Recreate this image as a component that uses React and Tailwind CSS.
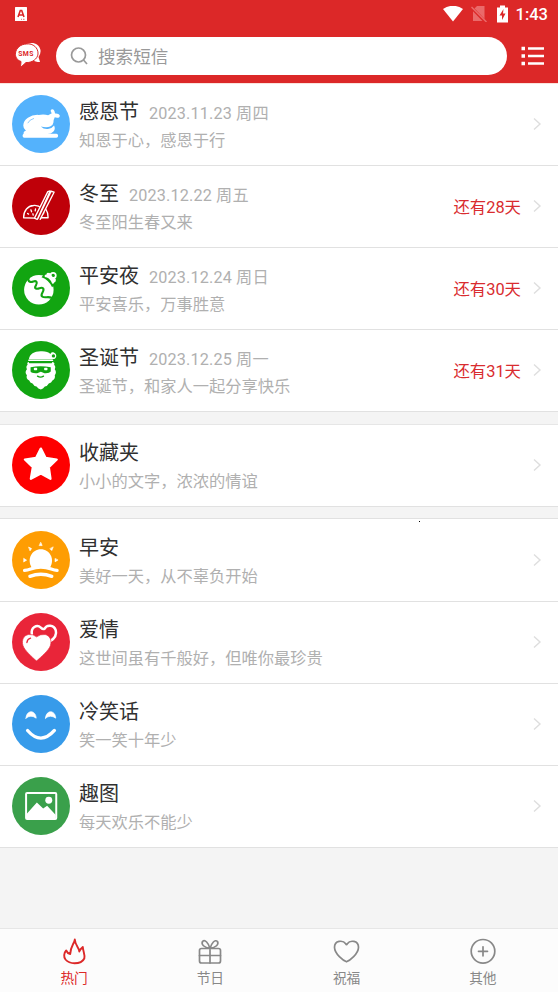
import React from "react";

const svgProps = {
  className: "mb-px h-[58px] w-[58px] shrink-0",
  fill: "none",
  strokeLinecap: "round",
  strokeLinejoin: "round",
};

function Turkey() {
  return (
    <svg {...svgProps} viewBox="35 34 175 175">
      <circle cx="122.500" cy="121.500" r="87.500" fill="#54b2fc" />
      <path fill="#fff" d="M70 152V148Q70 144 77 142Q69 136 69 126Q70 111 83 103Q97 93 115 94Q134 92 144 95L155 89Q149 81 154 78Q160 75 163 82L165 90Q176 89 179 95Q180 103 171 103L164 101Q160 108 160 117Q159 126 150 129Q140 133 122 129Q132 139 146 136Q156 134 162 126Q167 137 160 144Q153 152 142 152Z" />
      <path d="M83 118Q88 108 100 105" stroke="#54b2fc" strokeWidth="2" />
      <rect x="67" y="151" width="107" height="12" rx="5" fill="#fff" />
    </svg>
  );
}

function Dumpling() {
  return (
    <svg {...svgProps} viewBox="35 279 175 175">
      <circle cx="122.500" cy="366.500" r="87.500" fill="#bf0009" />
      <g stroke="#fff" strokeWidth="4">
        <path d="M70 402C70 380 83 366 100 365C110 364 119 368 124 373M137 376Q144 386 144 402L119 402M70 402L103 403" />
        <path d="M82 389l3 2M92 378l2 6M106 375l-1 6M98 390l1 4M131 387l-2 3" />
        <path fill="#bf0009" d="M103 403L143 323L150 321L111 407ZM113 405L153 322L162 325L120 407" />
      </g>
    </svg>
  );
}

function Ornament() {
  return (
    <svg {...svgProps} viewBox="35 35 175 175">
      <circle cx="122.500" cy="122.500" r="87.500" fill="#12a511" />
      <circle cx="116" cy="128" r="44.500" fill="#fff" />
      <path d="M88 84C83 92 82 102 90 104C98 106 104 98 109 104C114 111 99 120 107 124C115 128 123 117 129 124C135 131 118 142 126 148C133 154 144 147 154 152" stroke="#12a511" strokeWidth="6.500" />
      <path fill="#12a511" d="M124 90L140 72L172 104L156 120Q146 98 124 90Z" />
      <circle cx="159" cy="85" r="8" stroke="#fff" strokeWidth="5.500" />
      <path fill="#fff" d="M134 89Q132 82 139 82Q139 76 145 77Q148 76 150 79L165 94Q169 97 167 101Q167 105 163 105Q162 111 156 109Q152 99 146 94Q141 90 134 89Z" />
      <circle cx="159" cy="85" r="4" fill="#12a511" />
    </svg>
  );
}

function Santa() {
  return (
    <svg {...svgProps} viewBox="35 281 175 175">
      <circle cx="122.500" cy="368.500" r="87.500" fill="#12a511" />
      <path fill="#fff" d="M86 336C88 321 102 312 121 312C135 311 145 314 151 320C153 313 162 314 167 320C172 329 164 338 157 335V336Z" />
      <circle cx="160" cy="326" r="5" fill="#12a511" />
      <path fill="#fff" d="M84 344H158Q165 346 162 353Q168 358 164 366Q171 375 164 384Q167 394 157 400Q154 407 146 409Q142 417 134 418Q129 425 122 427Q114 425 109 418Q101 417 97 409Q89 407 87 400Q76 394 80 384Q72 375 80 366Q76 358 82 353Q79 346 84 344Z" />
      <path d="M86 339H157" stroke="#fff" strokeWidth="5" />
      <path d="M88 345.500H154" stroke="#12a511" strokeWidth="5" />
      <path fill="#12a511" d="M91 360Q121 355 152 360V373Q148 379 133 378L122 374L111 378Q94 379 91 373Z" />
      <rect x="101" y="362" width="10" height="7" rx="2" fill="#fff" />
      <rect x="132" y="362" width="10" height="7" rx="2" fill="#fff" />
      <path d="M112 387Q121 393 130 387" stroke="#12a511" strokeWidth="4" />
    </svg>
  );
}

function Favorite() {
  return (
    <svg {...svgProps} viewBox="35 108 175 175">
      <circle cx="122.500" cy="195.500" r="87.500" fill="#fe0000" />
      <path fill="#fff" stroke="#fff" strokeWidth="7" d="M122 146L136 174L170 179L146 202L151 237L122 221L92 237L98 202L74 179L108 174Z" />
    </svg>
  );
}

function Sunrise() {
  return (
    <svg {...svgProps} viewBox="35 392 175 175">
      <circle cx="122.500" cy="479.500" r="87.500" fill="#fe9d03" />
      <path fill="#fff" d="M94 502C79 476 95 447 122 447C149 447 165 476 150 502Z" />
      <g stroke="#fff" strokeWidth="10">
        <path d="M73 511C91 510 95 501 122 501C149 501 154 510 171 511" />
        <path d="M89 529Q122 516 155 529" />
      </g>
      <g fill="#fff" stroke="#fff" strokeWidth="2">
        <path d="M122 427l4 9h-8ZM86 441l8 4-4 6ZM159 441l-4 10-5-5ZM71 475l8 5-8 5ZM173 480l-8 5v-9Z" />
      </g>
    </svg>
  );
}

function Hearts() {
  return (
    <svg {...svgProps} viewBox="35 38 175 175">
      <circle cx="122.500" cy="125.500" r="87.500" fill="#e92539" />
      <path d="M95 102C91 82 110 71 122 82Q128 88 133 86C140 72 161 74 167 90C172 107 160 117 149 124" stroke="#fff" strokeWidth="7.500" />
      <path fill="#fff" stroke="#e92539" strokeWidth="2" d="M109 183C94 169 73 151 68 136C63 119 71 105 85 103Q99 101 109 110Q121 101 135 103C149 106 156 120 151 136C146 151 124 169 109 183Z" />
      <path d="M80 127Q81 117 91 114" stroke="#e92539" strokeWidth="4" />
    </svg>
  );
}

function Smile() {
  return (
    <svg {...svgProps} viewBox="35 285 175 175">
      <circle cx="122.500" cy="372.500" r="87.500" fill="#379bea" />
      <path fill="#fff" stroke="#fff" strokeWidth="2" d="M77 355C79 328 107 330 108 355Q92 343 77 355ZM136 355C138 328 166 330 167 355Q151 343 136 355Z" />
      <path d="M82 392Q122 438 163 392" stroke="#fff" strokeWidth="10" />
    </svg>
  );
}

function Picture() {
  return (
    <svg {...svgProps} viewBox="35 51 175 175">
      <circle cx="122.500" cy="138.500" r="87.500" fill="#3aa04b" />
      <rect x="77.500" y="99.500" width="91" height="78" rx="3" stroke="#fff" strokeWidth="6" />
      <circle cx="146" cy="121" r="10.500" fill="#fff" />
      <path fill="#fff" d="M79 175V163L110 128L129 146L141 138L167 166V175Z" />
    </svg>
  );
}

function Chevron() {
  return (
    <svg className="mb-px ml-3 h-3.5 w-2.5 shrink-0" viewBox="0 0 10 14" fill="none" stroke="#dedede" strokeWidth="1.400">
      <path d="M1 1.500L7 7L1 12.500" />
    </svg>
  );
}

const holidays = [
  { icon: Turkey, title: "感恩节", date: "2023.11.23 周四", text: "知恩于心，感恩于行" },
  { icon: Dumpling, title: "冬至", date: "2023.12.22 周五", text: "冬至阳生春又来", left: "还有28天" },
  { icon: Ornament, title: "平安夜", date: "2023.12.24 周日", text: "平安喜乐，万事胜意", left: "还有30天" },
  { icon: Santa, title: "圣诞节", date: "2023.12.25 周一", text: "圣诞节，和家人一起分享快乐", left: "还有31天" },
];
const favorites = [{ icon: Favorite, title: "收藏夹", text: "小小的文字，浓浓的情谊" }];
const topics = [
  { icon: Sunrise, title: "早安", text: "美好一天，从不辜负开始", tall: true },
  { icon: Hearts, title: "爱情", text: "这世间虽有千般好，但唯你最珍贵" },
  { icon: Smile, title: "冷笑话", text: "笑一笑十年少" },
  { icon: Picture, title: "趣图", text: "每天欢乐不能少" },
];

function Row({ icon: Icon, title, date, text, left, tall }) {
  return (
    <li className={`flex items-center border-b border-[#e1e1e1] bg-white pr-[15px] pl-[11.600px] ${tall ? "h-[83px]" : "h-[82px]"}`}>
      <Icon />
      <div className="ml-[9.500px] flex min-w-0 flex-1 flex-col pt-[2px] whitespace-nowrap">
        <div className="flex h-[30px] items-center">
          <span className="text-[20px] leading-[30px] text-[#303030]">{title}</span>
          {date && <span className="ml-2.5 pt-[3px] text-[16.200px] leading-6 tracking-[0.150px] text-[#b0b0b0]">{date}</span>}
        </div>
        <p className="mt-px text-[16.250px] leading-[26px] text-[#b0b0b0]">{text}</p>
      </div>
      {left && <span className="pt-[3px] text-[16.400px] leading-6 text-[#d92c2f]">{left}</span>}
      <Chevron />
    </li>
  );
}

const tabIcon = {
  className: "h-7 w-7",
  viewBox: "0 0 28 28",
  fill: "none",
  stroke: "currentColor",
  strokeWidth: "1.700",
  strokeLinecap: "round",
  strokeLinejoin: "round",
};

const tabs = [
  {
    label: "热门",
    active: true,
    icon: (
      <svg {...tabIcon} strokeWidth="1.900">
        <path d="M14.800 2.500C14.400 6.500 10.500 9 10.200 17Q7.500 16.500 6.200 13.500C3.800 16 3.500 20 5.500 22.500C8.500 26 12.500 26.200 14.500 26.200C18.500 26.200 22.500 25.200 24.300 21.500C25.300 17.500 23 14.500 22.800 10Q20.200 12 19.300 14.500C19 10.500 15.200 8.500 14.800 2.500Z" />
      </svg>
    ),
  },
  {
    label: "节日",
    icon: (
      <svg {...tabIcon}>
        <rect x="3.500" y="11.500" width="21" height="14.500" rx="2" />
        <path d="M3.500 18.500H24.500M14 11.500V26M14 11.500C8 10.500 5 7.500 6.500 4.500C9 2 12.500 6 14 11.500ZM14 11.500C20 10.500 23 7.500 21.500 4.500C19 2 15.500 6 14 11.500Z" />
      </svg>
    ),
  },
  {
    label: "祝福",
    icon: (
      <svg {...tabIcon}>
        <path d="M13.500 24.800C10.500 23.800 1.500 17 1.500 10.300C1.500 3.300 10 2.800 12.700 6.800Q13.500 8.300 14.300 6.800C17 2.800 25.500 3.300 25.500 10.300C25.500 17 16.500 23.800 13.500 24.800Z" />
      </svg>
    ),
  },
  {
    label: "其他",
    icon: (
      <svg {...tabIcon}>
        <circle cx="14" cy="14.300" r="11.800" />
        <path d="M14 9.800V18.800M9.500 14.300H18.500" />
      </svg>
    ),
  },
];

export default function App() {
  return (
    <div className="relative flex h-[992px] w-[558px] flex-col overflow-hidden bg-[#f4f4f4] font-[Roboto,'Noto_Sans_CJK_SC',sans-serif]">
      <header className="flex h-[84px] shrink-0 flex-col border-b border-[#fbe3dc] bg-[#dc2828] text-white">
        <div className="flex h-7 items-center pr-[10px] pl-[15px]">
          <svg className="h-3.5 w-3" viewBox="0 0 12 14">
            <rect width="12" height="14" rx="0.500" fill="#fff" />
            <path d="M3 10L5.300 3.500H6.700L9 10M4 8H8" fill="none" stroke="#dc2828" strokeWidth="1.600" />
            <path d="M6 12.300h1M8 12.300h1.500" stroke="#dc2828" strokeWidth="0.700" />
          </svg>
          <svg className="ml-auto h-4 w-5" viewBox="0 0 20 16">
            <path d="M0 3Q10-3.500 20 3L10 15.500Z" fill="#fff" />
          </svg>
          <svg className="ml-2 h-4 w-4" viewBox="0 0 16 16">
            <path d="M6 0H13.500V15H2V4Z" fill="#ea6a6a" />
            <path d="M0.500 1.500L14.500 16" stroke="#dc2828" strokeWidth="3" />
            <path d="M0.500 1L15.500 16" stroke="#ea6a6a" strokeWidth="1.400" />
          </svg>
          <svg className="mb-px ml-[9.500px] h-[18px] w-[11px]" viewBox="0 0 11 18">
            <path d="M0 2.500H3V0.500H8V2.500H11V17.500H0Z" fill="#fff" />
            <path d="M6.500 4L2.500 10.500H5V15L8.500 8.500H6Z" fill="#dc2828" />
          </svg>
          <span className="ml-2 pt-0.5 text-[16.500px] leading-5 font-medium">1:43</span>
        </div>
        <div className="flex h-[55px] items-center pr-[14px] pl-[15px]">
          <svg className="h-[27px] w-[27px] shrink-0" viewBox="0 0 27 27">
            <path d="M10 4C14-1 24 0 25.500 8Q26 12 23.500 15L25 20Q20 20 18 18Z" fill="#fff" />
            <path d="M11.500 2C18 1 23.500 6 23 12C22.500 17 17 21 11 20.500L5.500 25.500L6 19.500C2 18 0 15 0.500 11C1 6 6 2 11.500 2Z" fill="#fff" stroke="#dc2828" strokeWidth="1" />
            <text x="3.200" y="14.300" fontSize="6.800" fontWeight="700" letterSpacing="0.500" fontFamily="Roboto, sans-serif" fill="#dc2828">SMS</text>
          </svg>
          <div className="ml-[14px] flex h-[38px] flex-1 items-center rounded-full bg-white pl-[14px] text-[#999]">
            <svg className="h-5 w-5" viewBox="0 0 20 20" fill="none" stroke="#999" strokeWidth="1.700">
              <circle cx="8.500" cy="9" r="7" />
              <path d="M13.500 14L17 18" />
            </svg>
            <span className="ml-2 pt-0.5 text-[17.600px] leading-6">搜索短信</span>
          </div>
          <svg className="ml-[14px] h-[22px] w-[23px] shrink-0" viewBox="0 0 23 22" fill="none" stroke="#fff" strokeWidth="2.300">
            <path d="M7 3.500H23M7 11H23M7 18.500H23" />
            <path d="M0.500 3.500H4M0.500 11H4M0.500 18.500H4" strokeWidth="3.300" />
          </svg>
        </div>
      </header>

      <main className="flex flex-1 flex-col">
        <ul>{holidays.map((item) => <Row key={item.title} {...item} />)}</ul>
        <ul className="mt-3 border-t border-[#e6e6e6]">{favorites.map((item) => <Row key={item.title} {...item} />)}</ul>
        <ul className="mt-[11px] border-t border-[#e1e1e1]">{topics.map((item) => <Row key={item.title} {...item} />)}</ul>
      </main>

      <nav className="flex h-16 shrink-0 border-t border-[#e6e6e6] bg-[#fcfcfc] pr-[7px] pl-[6px]">
        {tabs.map((tab) => (
          <div key={tab.label} className={`flex flex-1 flex-col items-center pt-2 ${tab.active ? "text-[#dc2828]" : "text-[#888]"}`}>
            {tab.icon}
            <span className="mt-[3px] text-[13.700px] leading-5">{tab.label}</span>
          </div>
        ))}
      </nav>
      <i className="absolute top-[521px] left-[419px] h-px w-px bg-black" />
    </div>
  );
}
